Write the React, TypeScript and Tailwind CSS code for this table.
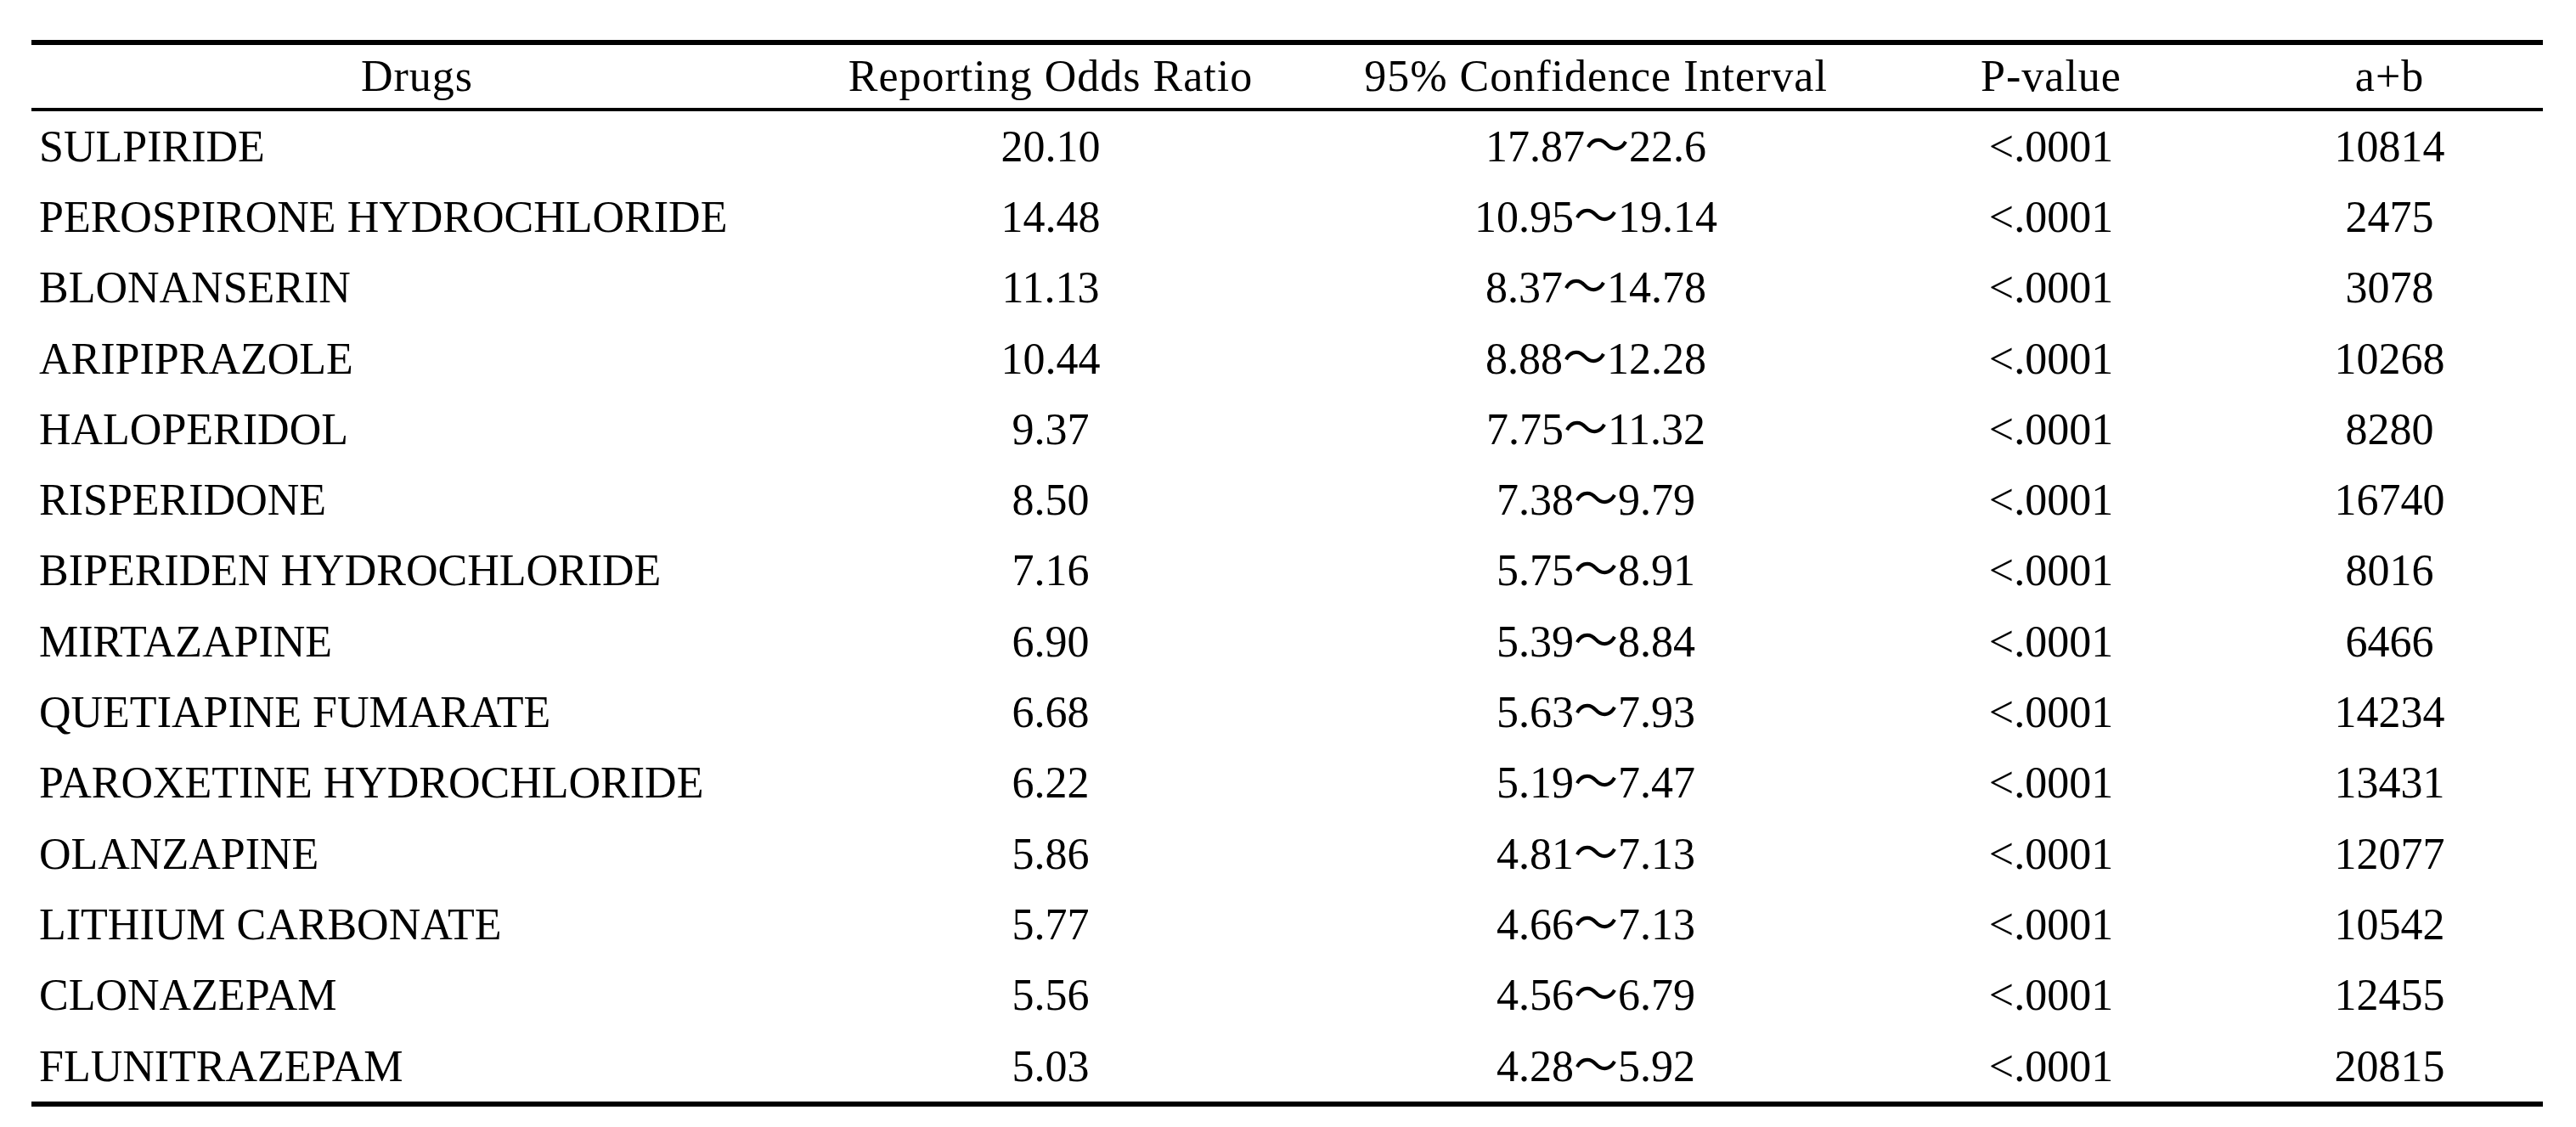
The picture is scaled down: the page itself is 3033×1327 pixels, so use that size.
const rows: string[][] = [
  ["SULPIRIDE", "20.10", "17.87～22.6", "<.0001", "10814"],
  ["PEROSPIRONE HYDROCHLORIDE", "14.48", "10.95～19.14", "<.0001", "2475"],
  ["BLONANSERIN", "11.13", "8.37～14.78", "<.0001", "3078"],
  ["ARIPIPRAZOLE", "10.44", "8.88～12.28", "<.0001", "10268"],
  ["HALOPERIDOL", "9.37", "7.75～11.32", "<.0001", "8280"],
  ["RISPERIDONE", "8.50", "7.38～9.79", "<.0001", "16740"],
  ["BIPERIDEN HYDROCHLORIDE", "7.16", "5.75～8.91", "<.0001", "8016"],
  ["MIRTAZAPINE", "6.90", "5.39～8.84", "<.0001", "6466"],
  ["QUETIAPINE FUMARATE", "6.68", "5.63～7.93", "<.0001", "14234"],
  ["PAROXETINE HYDROCHLORIDE", "6.22", "5.19～7.47", "<.0001", "13431"],
  ["OLANZAPINE", "5.86", "4.81～7.13", "<.0001", "12077"],
  ["LITHIUM CARBONATE", "5.77", "4.66～7.13", "<.0001", "10542"],
  ["CLONAZEPAM", "5.56", "4.56～6.79", "<.0001", "12455"],
  ["FLUNITRAZEPAM", "5.03", "4.28～5.92", "<.0001", "20815"],
];

const cols = "grid grid-cols-[908px_584px_700px_372px_393px] items-center";

export default function App() {
  return (
    <div className="w-[3033px] h-[1327px] bg-white pt-[47px] pl-[37px] font-['Liberation_Serif','Noto_Sans_CJK_JP',serif] text-[52px] leading-none text-black">
      <div className="w-[2957px] border-t-[6px] border-b-[6px] border-black">
        <div className={`${cols} h-[78px] border-b-[4px] border-black text-center tracking-[1px]`}>
          <div>Drugs</div>
          <div>Reporting Odds Ratio</div>
          <div>95% Confidence Interval</div>
          <div>P-value</div>
          <div className="pl-[32px]">a+b</div>
        </div>
        {rows.map((r) => (
          <div key={r[0]} className={`${cols} h-[83.3px]`}>
            <div className="pl-[9px]">{r[0]}</div>
            <div className="text-center">{r[1]}</div>
            <div className="text-center">{r[2]}</div>
            <div className="text-center">{r[3]}</div>
            <div className="text-center pl-[32px]">{r[4]}</div>
          </div>
        ))}
      </div>
    </div>
  );
}
